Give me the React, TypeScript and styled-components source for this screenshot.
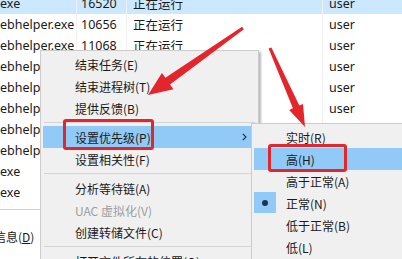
import React from 'react';
import styled, { createGlobalStyle } from 'styled-components';

const GlobalStyle = createGlobalStyle`
  html, body {
    margin: 0;
    padding: 0;
    background: #ffffff;
    overflow: hidden;
  }
  body {
    font-family: "Noto Sans", "Noto Sans CJK SC", sans-serif;
    font-size: 12px;
    color: #1a1a1a;
  }
`;

const Screen = styled.div`
  position: relative;
  width: 402px;
  height: 259px;
  overflow: hidden;
`;

const List = styled.div`
  display: flex;
  flex-direction: column;
  height: 216px;
  margin-top: -7px;
  font-size: 12.5px;
`;

const Row = styled.div<{ $active?: boolean }>`
  display: grid;
  grid-template-columns: 77px 50px 196px 1fr;
  height: 21px;
  align-items: center;
  background: ${(p) => (p.$active ? '#cce8ff' : 'transparent')};
`;

const Cell = styled.div<{ $pad?: number }>`
  height: 100%;
  display: flex;
  align-items: center;
  padding-left: ${(p) => p.$pad ?? 0}px;
  border-right: 1px solid #efefef;
  white-space: nowrap;
  overflow: hidden;
  &:last-child {
    border-right: none;
  }
`;

const Footer = styled.div`
  height: 50px;
  border-top: 1px solid #d0d0d0;
  display: flex;
  align-items: center;
  font-family: "Noto Sans CJK SC", sans-serif;
`;

const FooterLink = styled.span`
  margin-left: -30px;
  margin-top: 2px;
  white-space: nowrap;
`;

const Menu = styled.div`
  position: absolute;
  left: 40px;
  top: 50px;
  width: 213px;
  padding: 2px;
  background: #f0f0f0;
  border: 1px solid #cccccc;
  box-shadow: 2px 2px 2px rgba(0, 0, 0, 0.28);
  font-family: "Noto Sans CJK SC", sans-serif;
  display: flex;
  flex-direction: column;
`;

const SubMenu = styled(Menu)`
  left: 251px;
  top: 123px;
  width: 160px;
  box-shadow: none;
  border-right: none;
  z-index: 2;
`;

const Item = styled.div<{ $hot?: boolean; $disabled?: boolean; $indent: number }>`
  position: relative;
  height: 22px;
  display: flex;
  align-items: center;
  padding-left: ${(p) => p.$indent}px;
  background: ${(p) => (p.$hot ? '#91c9f7' : 'transparent')};
  color: ${(p) => (p.$disabled ? '#9d9d9d' : '#1a1a1a')};
  white-space: nowrap;
`;

const Separator = styled.div`
  height: 1px;
  margin: 3px 1px 3px 1px;
  background: #d4d4d4;
`;

const Chevron = styled.svg`
  position: absolute;
  right: 9px;
  top: 7px;
`;

const Check = styled.div`
  position: absolute;
  left: 0;
  top: 0;
  width: 22px;
  height: 21px;
  background: #91c9f7;
  display: flex;
  align-items: center;
  justify-content: center;
  &::after {
    content: '';
    width: 6px;
    height: 6px;
    border-radius: 50%;
    background: #1b3553;
  }
`;

const Highlight = styled.div<{ $x: number; $y: number; $w: number; $h: number }>`
  position: absolute;
  left: ${(p) => p.$x}px;
  top: ${(p) => p.$y}px;
  width: ${(p) => p.$w}px;
  height: ${(p) => p.$h}px;
  box-sizing: border-box;
  border: 3px solid #e3262b;
  border-radius: 3px;
  z-index: 5;
`;

const Annotations = styled.svg`
  position: absolute;
  left: 0;
  top: 0;
  z-index: 6;
  pointer-events: none;
`;

const rows = [
  { name: 'exe', pid: '16520', active: true },
  { name: 'ebhelper.exe', pid: '10656' },
  { name: 'ebhelper.exe', pid: '11068' },
  { name: 'ebhelper.exe', pid: '11252' },
  { name: 'ebhelper.exe', pid: '11408' },
  { name: 'ebhelper.exe', pid: '12140' },
  { name: 'ebhelper.exe', pid: '12588' },
  { name: 'ebhelper.exe', pid: '13020' },
  { name: 'exe', pid: '13456' },
  { name: 'exe', pid: '14108' },
];

type Entry = { label: string; disabled?: boolean; hot?: boolean; sub?: boolean } | 'sep';

const menuEntries: Entry[] = [
  { label: '结束任务(E)' },
  { label: '结束进程树(T)' },
  { label: '提供反馈(B)' },
  'sep',
  { label: '设置优先级(P)', hot: true, sub: true },
  { label: '设置相关性(F)' },
  'sep',
  { label: '分析等待链(A)' },
  { label: 'UAC 虚拟化(V)', disabled: true },
  { label: '创建转储文件(C)' },
  'sep',
  { label: '打开文件所在的位置(O)' },
];

const priorities = [
  { label: '实时(R)' },
  { label: '高(H)', hot: true },
  { label: '高于正常(A)' },
  { label: '正常(N)', checked: true },
  { label: '低于正常(B)' },
  { label: '低(L)' },
];

const App: React.FC = () => {
  return (
    <Screen>
      <GlobalStyle />
      <List>
        {rows.map((r, i) => (
          <Row key={i} $active={r.active}>
            <Cell>{r.name}</Cell>
            <Cell $pad={4}>{r.pid}</Cell>
            <Cell $pad={6}>正在运行</Cell>
            <Cell $pad={6}>user</Cell>
          </Row>
        ))}
      </List>
      <Footer>
        <FooterLink>
          简略信息(<u>D</u>)
        </FooterLink>
      </Footer>

      <Menu>
        {menuEntries.map((e, i) =>
          e === 'sep' ? (
            <Separator key={i} />
          ) : (
            <Item key={i} $indent={32} $hot={e.hot} $disabled={e.disabled}>
              {e.label}
              {e.sub && (
                <Chevron width="5" height="8" viewBox="0 0 5 8">
                  <path d="M0.8 0.8 L4 4 L0.8 7.2" fill="none" stroke="#2b2b2b" strokeWidth="1.1" />
                </Chevron>
              )}
            </Item>
          )
        )}
      </Menu>

      <SubMenu>
        {priorities.map((p, i) => (
          <Item key={i} $indent={32} $hot={p.hot}>
            {p.checked && <Check />}
            {p.label}
          </Item>
        ))}
      </SubMenu>

      <Highlight $x={63} $y={119} $w={91} $h={31} />
      <Highlight $x={268} $y={144} $w={79} $h={28} />

      <Annotations width="402" height="259" viewBox="0 0 402 259">
        <polygon
          points="242.1,26.8 165.4,77.8 161.9,72.9 148,95 173.5,89.3 170,84.4 243.9,29.2"
          fill="#e3262b"
        />
        <polygon
          points="268.6,48.6 292.9,108.3 289.2,109.9 305,127 303,103.9 299.3,105.5 271.4,47.4"
          fill="#e3262b"
        />
      </Annotations>
    </Screen>
  );
};

export default App;
